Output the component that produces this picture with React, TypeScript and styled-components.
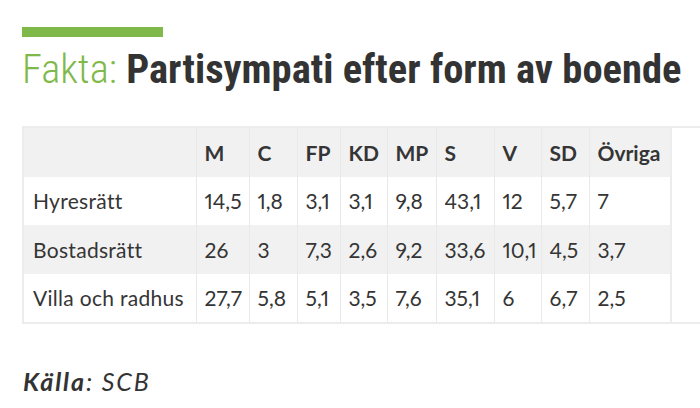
import React from "react";
import styled, { createGlobalStyle } from "styled-components";

const GlobalStyle = createGlobalStyle`
  html, body {
    margin: 0;
    padding: 0;
    background: #ffffff;
    overflow: hidden;
  }
`;

const Page = styled.div`
  width: 700px;
  height: 408px;
  padding: 27px 0 0 22px;
  box-sizing: border-box;
  overflow: hidden;
  font-family: Lato, "Open Sans", sans-serif;
  color: #353535;
`;

const Accent = styled.div`
  width: 141px;
  height: 10px;
  background: #7eb94a;
`;

const Heading = styled.h1`
  margin: 10px 0 0;
  font-family: "Roboto Condensed", "Liberation Sans Narrow", Roboto, sans-serif;
  font-stretch: condensed;
  font-size: 40.5px;
  line-height: 44px;
  font-weight: 700;
  color: #333333;
  white-space: nowrap;

  span {
    font-weight: 300;
    color: #7eb94a;
  }
`;

const TableWrap = styled.div`
  margin-top: 35px;
  width: 720px;
  border-top: 2px solid #ececec;
  border-bottom: 2px solid #ececec;
  border-left: 2px solid #ececec;
`;

const Table = styled.table`
  border-collapse: collapse;
  table-layout: fixed;
  width: 645px;
  border-right: 2px solid #ececec;
  font-size: 21px;
  font-variant-numeric: proportional-nums;
  font-feature-settings: "pnum" 1;
`;

const Col = styled.col<{ w: number }>`
  width: ${(p) => p.w}px;
`;

const Row = styled.tr<{ shade?: boolean }>`
  height: 48.5px;
  background: ${(p) => (p.shade ? "#f1f1f1" : "#ffffff")};
`;

const Head = styled.th`
  text-align: left;
  font-weight: 700;
  padding: 0 7px 0 8px;
  border-left: 1px solid #e9e9e9;
  white-space: nowrap;
  &:first-child {
    border-left: none;
  }
`;

const Cell = styled.td`
  text-align: left;
  padding: 0 6px 0 8px;
  border-left: 1px solid #e9e9e9;
  white-space: nowrap;
  &:first-child {
    border-left: none;
    padding-left: 9px;
    letter-spacing: 0.3px;
  }
`;

const Source = styled.p`
  margin: 42px 0 0 1px;
  font-size: 25px;
  line-height: 30px;
  letter-spacing: 1.9px;
  font-style: italic;
  color: #333333;

  b {
    font-weight: 700;
  }
`;

const widths = [172, 53, 48, 43, 47, 49, 58, 47, 48, 82];
const parties = ["M", "C", "FP", "KD", "MP", "S", "V", "SD", "Övriga"];
const rows: [string, string[]][] = [
  ["Hyresrätt", ["14,5", "1,8", "3,1", "3,1", "9,8", "43,1", "12", "5,7", "7"]],
  ["Bostadsrätt", ["26", "3", "7,3", "2,6", "9,2", "33,6", "10,1", "4,5", "3,7"]],
  ["Villa och radhus", ["27,7", "5,8", "5,1", "3,5", "7,6", "35,1", "6", "6,7", "2,5"]],
];

const App: React.FC = () => {
  return (
    <>
      <GlobalStyle />
      <Page>
        <Accent />
        <Heading>
          <span>Fakta:</span> Partisympati efter form av boende
        </Heading>
        <TableWrap>
          <Table>
            <colgroup>
              {widths.map((w, i) => (
                <Col key={i} w={w} />
              ))}
            </colgroup>
            <thead>
              <Row shade>
                <Head></Head>
                {parties.map((p) => (
                  <Head key={p}>{p}</Head>
                ))}
              </Row>
            </thead>
            <tbody>
              {rows.map(([label, values], i) => (
                <Row key={label} shade={i % 2 === 1}>
                  <Cell>{label}</Cell>
                  {values.map((v, j) => (
                    <Cell key={j}>{v}</Cell>
                  ))}
                </Row>
              ))}
            </tbody>
          </Table>
        </TableWrap>
        <Source>
          <b>Källa</b>: SCB
        </Source>
      </Page>
    </>
  );
};

export default App;
